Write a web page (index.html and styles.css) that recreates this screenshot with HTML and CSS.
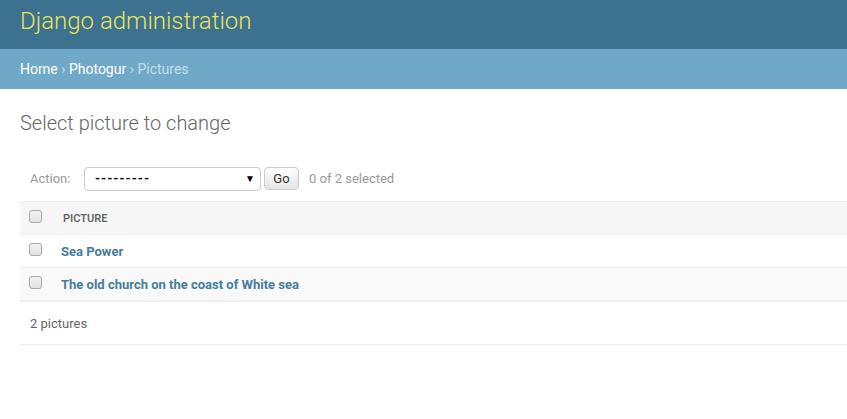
FILE: index.html
```html
<!DOCTYPE html>
<html lang="en">
<head>
<meta charset="utf-8">
<title>Select picture to change | Django site admin</title>
<link rel="stylesheet" href="styles.css">
</head>
<body>
<div class="header">
  <h1 class="branding">Django administration</h1>
</div>
<div class="breadcrumbs">
  <a href="#">Home</a><span class="sep">›</span><a href="#">Photogur</a><span class="sep">›</span><span class="current">Pictures</span>
</div>
<div class="content">
  <h1 class="title">Select picture to change</h1>
  <div class="actions">
    <label class="action-label">Action:</label>
    <div class="select">
      <span>---------</span>
      <span class="arrow">▼</span>
    </div>
    <button class="go">Go</button>
    <span class="counter">0 of 2 selected</span>
  </div>
  <div class="results">
    <div class="row head">
      <span class="cb"><input type="checkbox"></span>
      <span class="col">Picture</span>
    </div>
    <div class="row">
      <span class="cb"><input type="checkbox"></span>
      <a class="col link" href="#">Sea Power</a>
    </div>
    <div class="row alt">
      <span class="cb"><input type="checkbox"></span>
      <a class="col link" href="#">The old church on the coast of White sea</a>
    </div>
  </div>
  <div class="paginator">2 pictures</div>
</div>
</body>
</html>
```

FILE: styles.css
```css
html, body {
  margin: 0;
  padding: 0;
  background: #fff;
  font-family: Roboto, "Liberation Sans", sans-serif;
  color: #333;
}

.header {
  height: 49px;
  background: #3c7190;
  display: flex;
  align-items: center;
  padding: 0 20px;
}

.branding {
  margin: 0;
  font-size: 24px;
  font-weight: 300;
  color: #eae35a;
  line-height: 1;
  position: relative;
  top: -4px;
}

.breadcrumbs {
  height: 40px;
  background: #70a9c8;
  display: flex;
  align-items: center;
  padding: 0 20px;
  font-size: 14px;
  color: #c4dce8;
}

.breadcrumbs a {
  color: #fff;
  text-decoration: none;
}

.breadcrumbs .sep {
  padding: 0 3.5px;
}

.content {
  padding: 20px 0 0 20px;
}

.title {
  margin: 0;
  height: 47px;
  font-size: 20px;
  font-weight: 300;
  color: #666;
  line-height: 29px;
}

.actions {
  display: flex;
  align-items: center;
  height: 45px;
  padding: 0 10px;
  font-size: 13px;
  color: #999;
}

.action-label {
  width: 54px;
}

.select {
  box-sizing: border-box;
  width: 177px;
  height: 24px;
  border: 1px solid #ccc;
  border-radius: 4px;
  display: flex;
  align-items: center;
  justify-content: space-between;
  padding: 0 5px 0 10px;
  color: #000;
  font-size: 13px;
  font-weight: 700;
  letter-spacing: 1px;
}

.select .arrow {
  font-size: 10px;
  font-weight: 400;
  letter-spacing: 0;
}

.go {
  margin-left: 3px;
  height: 23px;
  width: 35px;
  border: 1px solid #ccc;
  border-radius: 4px;
  background: #fff;
  box-shadow: 0 -15px 20px -10px rgba(0, 0, 0, 0.15) inset;
  font-family: Roboto, "Liberation Sans", sans-serif;
  font-size: 13px;
  color: #333;
  padding: 0;
}

.counter {
  margin-left: 10px;
}

.results {
  border-bottom: 2px solid #eee;
}

.row {
  height: 33px;
  display: flex;
  align-items: center;
  border-top: 1px solid #eee;
  box-sizing: border-box;
}

.row.head {
  background: #f6f6f6;
}

.row.alt {
  background: #f9f9f9;
}

.cb {
  width: 32px;
  padding-left: 9px;
  display: flex;
  align-items: center;
  flex-shrink: 0;
}

.cb input {
  -webkit-appearance: none;
  appearance: none;
  box-sizing: border-box;
  margin: 0;
  width: 13px;
  height: 13px;
  border: 1px solid #a9a9a9;
  border-radius: 3px;
  background: linear-gradient(#f2f2f2, #e2e2e2);
  position: relative;
  top: -2px;
}

.col {
  font-size: 13px;
}

.head .col {
  font-size: 11px;
  font-weight: 600;
  text-transform: uppercase;
  color: #666;
  padding-left: 2px;
}

.link {
  color: #447e9b;
  font-weight: 700;
  text-decoration: none;
}

.paginator {
  height: 42px;
  display: flex;
  align-items: center;
  padding-left: 10px;
  font-size: 13px;
  color: #666;
  border-bottom: 1px solid #eee;
}
```
